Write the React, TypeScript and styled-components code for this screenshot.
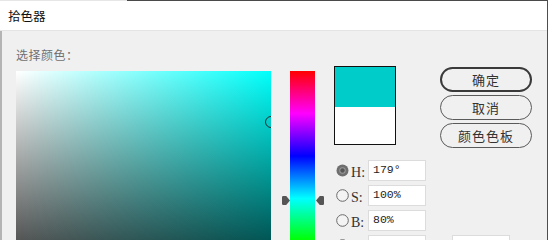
import React from "react";
import styled, { createGlobalStyle } from "styled-components";

const Global = createGlobalStyle`
  html, body { margin: 0; padding: 0; background: #f0f0f0; overflow: hidden; }
  * { box-sizing: border-box; }
`;

const CJK = `"Noto Sans CJK SC", "Noto Sans", sans-serif`;

const Dialog = styled.div`
  width: 548px;
  height: 240px;
  display: flex;
  flex-direction: column;
  background: #f0f0f0;
  border-right: 1px solid #4e4e4e;
  overflow: hidden;
  font-family: ${CJK};
`;

const TopEdge = styled.div`
  height: 1px;
  flex: none;
  background: linear-gradient(to right, #e6e6e6 0 127px, #4a4a4a 127px);
`;

const TitleBar = styled.div`
  height: 30px;
  flex: none;
  background: #ffffff;
  border-bottom: 1px solid #e4e4e4;
  padding-left: 8px;
  display: flex;
  align-items: center;
  font-size: 12.5px;
  color: #111;
`;

const Body = styled.div`
  flex: 1;
  display: flex;
  align-items: flex-start;
  border-left: 2px solid #b4b4b4;
  padding-left: 14px;
`;

const Column = styled.div<{ $top: number; $width?: number; $gap: number }>`
  flex: none;
  display: flex;
  flex-direction: column;
  padding-top: ${(p) => p.$top}px;
  margin-right: ${(p) => p.$gap}px;
  ${(p) => (p.$width ? `width: ${p.$width}px;` : "")}
  position: relative;
`;

const Label = styled.div`
  font-size: 12px;
  line-height: 16px;
  height: 16px;
  color: #707070;
  margin-bottom: 8px;
  letter-spacing: 0.5px;
`;

const Field = styled.div`
  width: 255px;
  height: 255px;
  position: relative;
  overflow: hidden;
  background: linear-gradient(to bottom, rgba(0, 0, 0, 0), #000),
    linear-gradient(to right, #ffffff, #00fffb);
`;

const Marker = styled.div`
  position: absolute;
  left: 249px;
  top: 45px;
  width: 12px;
  height: 12px;
  border-radius: 50%;
  border: 1.5px solid #2a2a2a;
`;

const HueBar = styled.div`
  width: 25px;
  height: 255px;
  position: relative;
  background: linear-gradient(
    to bottom,
    #ff0000 0%,
    #ff00ff 16.67%,
    #0000ff 33.33%,
    #00ffff 50%,
    #00ff00 66.67%,
    #ffff00 83.33%,
    #ff0000 100%
  );
`;

const Arrow = styled.svg<{ $side: "left" | "right" }>`
  position: absolute;
  top: 125px;
  ${(p) => (p.$side === "left" ? "left: -8px;" : "right: -9px; transform: scaleX(-1);")}
`;

const Swatch = styled.div`
  width: 62px;
  height: 79px;
  border: 1px solid #111;
  display: flex;
  flex-direction: column;
  margin-bottom: 15px;
`;

const SwatchPart = styled.div<{ $color: string; $h: number }>`
  height: ${(p) => p.$h}px;
  background: ${(p) => p.$color};
`;

const Rows = styled.div`
  display: flex;
  flex-direction: column;
  gap: 4px;
`;

const Row = styled.div`
  display: flex;
  align-items: center;
  height: 21px;
  width: max-content;
`;

const RadioSvg = styled.svg`
  margin-left: 2px;
  flex: none;
`;

const FieldLabel = styled.span<{ $w: number; $ml: number }>`
  font-family: "Liberation Serif", "Noto Sans CJK SC", serif;
  font-size: 14px;
  color: #333;
  width: ${(p) => p.$w}px;
  margin-left: ${(p) => p.$ml}px;
  padding-top: 4px;
`;

const ValueBox = styled.div`
  width: 58px;
  height: 21px;
  background: #ffffff;
  border: 1px solid #dcdcdc;
  padding-left: 4px;
  font-family: "Liberation Mono", monospace;
  font-size: 11.5px;
  line-height: 18px;
  color: #222;
`;

const Buttons = styled.div`
  display: flex;
  flex-direction: column;
  gap: 3px;
`;

const Button = styled.button<{ $primary?: boolean }>`
  width: 92px;
  height: 25px;
  border-radius: 13px;
  border: ${(p) => (p.$primary ? "2px solid #3a3a3a" : "1px solid #5a5a5a")};
  background: #f0f0f0;
  font-family: ${CJK};
  font-size: 13px;
  color: #333;
  padding: 0;
  letter-spacing: 1px;
`;

const Radio = ({ checked }: { checked?: boolean }) => (
  <RadioSvg width="13" height="13" viewBox="0 0 13 13">
    {checked ? (
      <>
        <circle cx="6.5" cy="6.5" r="6" fill="#6e6e6e" />
        <circle cx="6.5" cy="6.5" r="3.2" fill="#9a9a9a" />
        <circle cx="6.5" cy="6.5" r="2.2" fill="#555" />
      </>
    ) : (
      <circle cx="6.5" cy="6.5" r="5.8" fill="#f4f4f4" stroke="#6a6a6a" strokeWidth="1" />
    )}
  </RadioSvg>
);

const ArrowShape = ({ side }: { side: "left" | "right" }) => (
  <Arrow $side={side} width="8" height="9" viewBox="0 0 8 9">
    <path d="M0 1.2 Q0 0 1.2 0 L4.2 0 L8 4.5 L4.2 9 L1.2 9 Q0 9 0 7.8 Z" fill="#555" />
  </Arrow>
);

const rows = [
  { key: "H", value: "179°", checked: true },
  { key: "S", value: "100%" },
  { key: "B", value: "80%" },
  { key: "R", value: "0", extra: { key: "C", value: "75%" } },
];

export default function App() {
  return (
    <>
      <Global />
      <Dialog>
        <TopEdge />
        <TitleBar>拾色器</TitleBar>
        <Body>
          <Column $top={16} $gap={19}>
            <Label>选择颜色：</Label>
            <Field>
              <Marker />
            </Field>
          </Column>
          <Column $top={40} $gap={19}>
            <HueBar>
              <ArrowShape side="left" />
              <ArrowShape side="right" />
            </HueBar>
          </Column>
          <Column $top={35} $width={92} $gap={14}>
            <Swatch>
              <SwatchPart $color="#00ccc9" $h={40} />
              <SwatchPart $color="#ffffff" $h={37} />
            </Swatch>
            <Rows>
              {rows.map((r) => (
                <Row key={r.key}>
                  <Radio checked={r.checked} />
                  <FieldLabel $w={17} $ml={2}>{r.key}:</FieldLabel>
                  <ValueBox>{r.value}</ValueBox>
                  {r.extra && (
                    <>
                      <FieldLabel $w={15} $ml={11}>{r.extra.key}:</FieldLabel>
                      <ValueBox>{r.extra.value}</ValueBox>
                    </>
                  )}
                </Row>
              ))}
            </Rows>
          </Column>
          <Column $top={36} $gap={0}>
            <Buttons>
              <Button $primary>确定</Button>
              <Button>取消</Button>
              <Button>颜色色板</Button>
            </Buttons>
          </Column>
        </Body>
      </Dialog>
    </>
  );
}
